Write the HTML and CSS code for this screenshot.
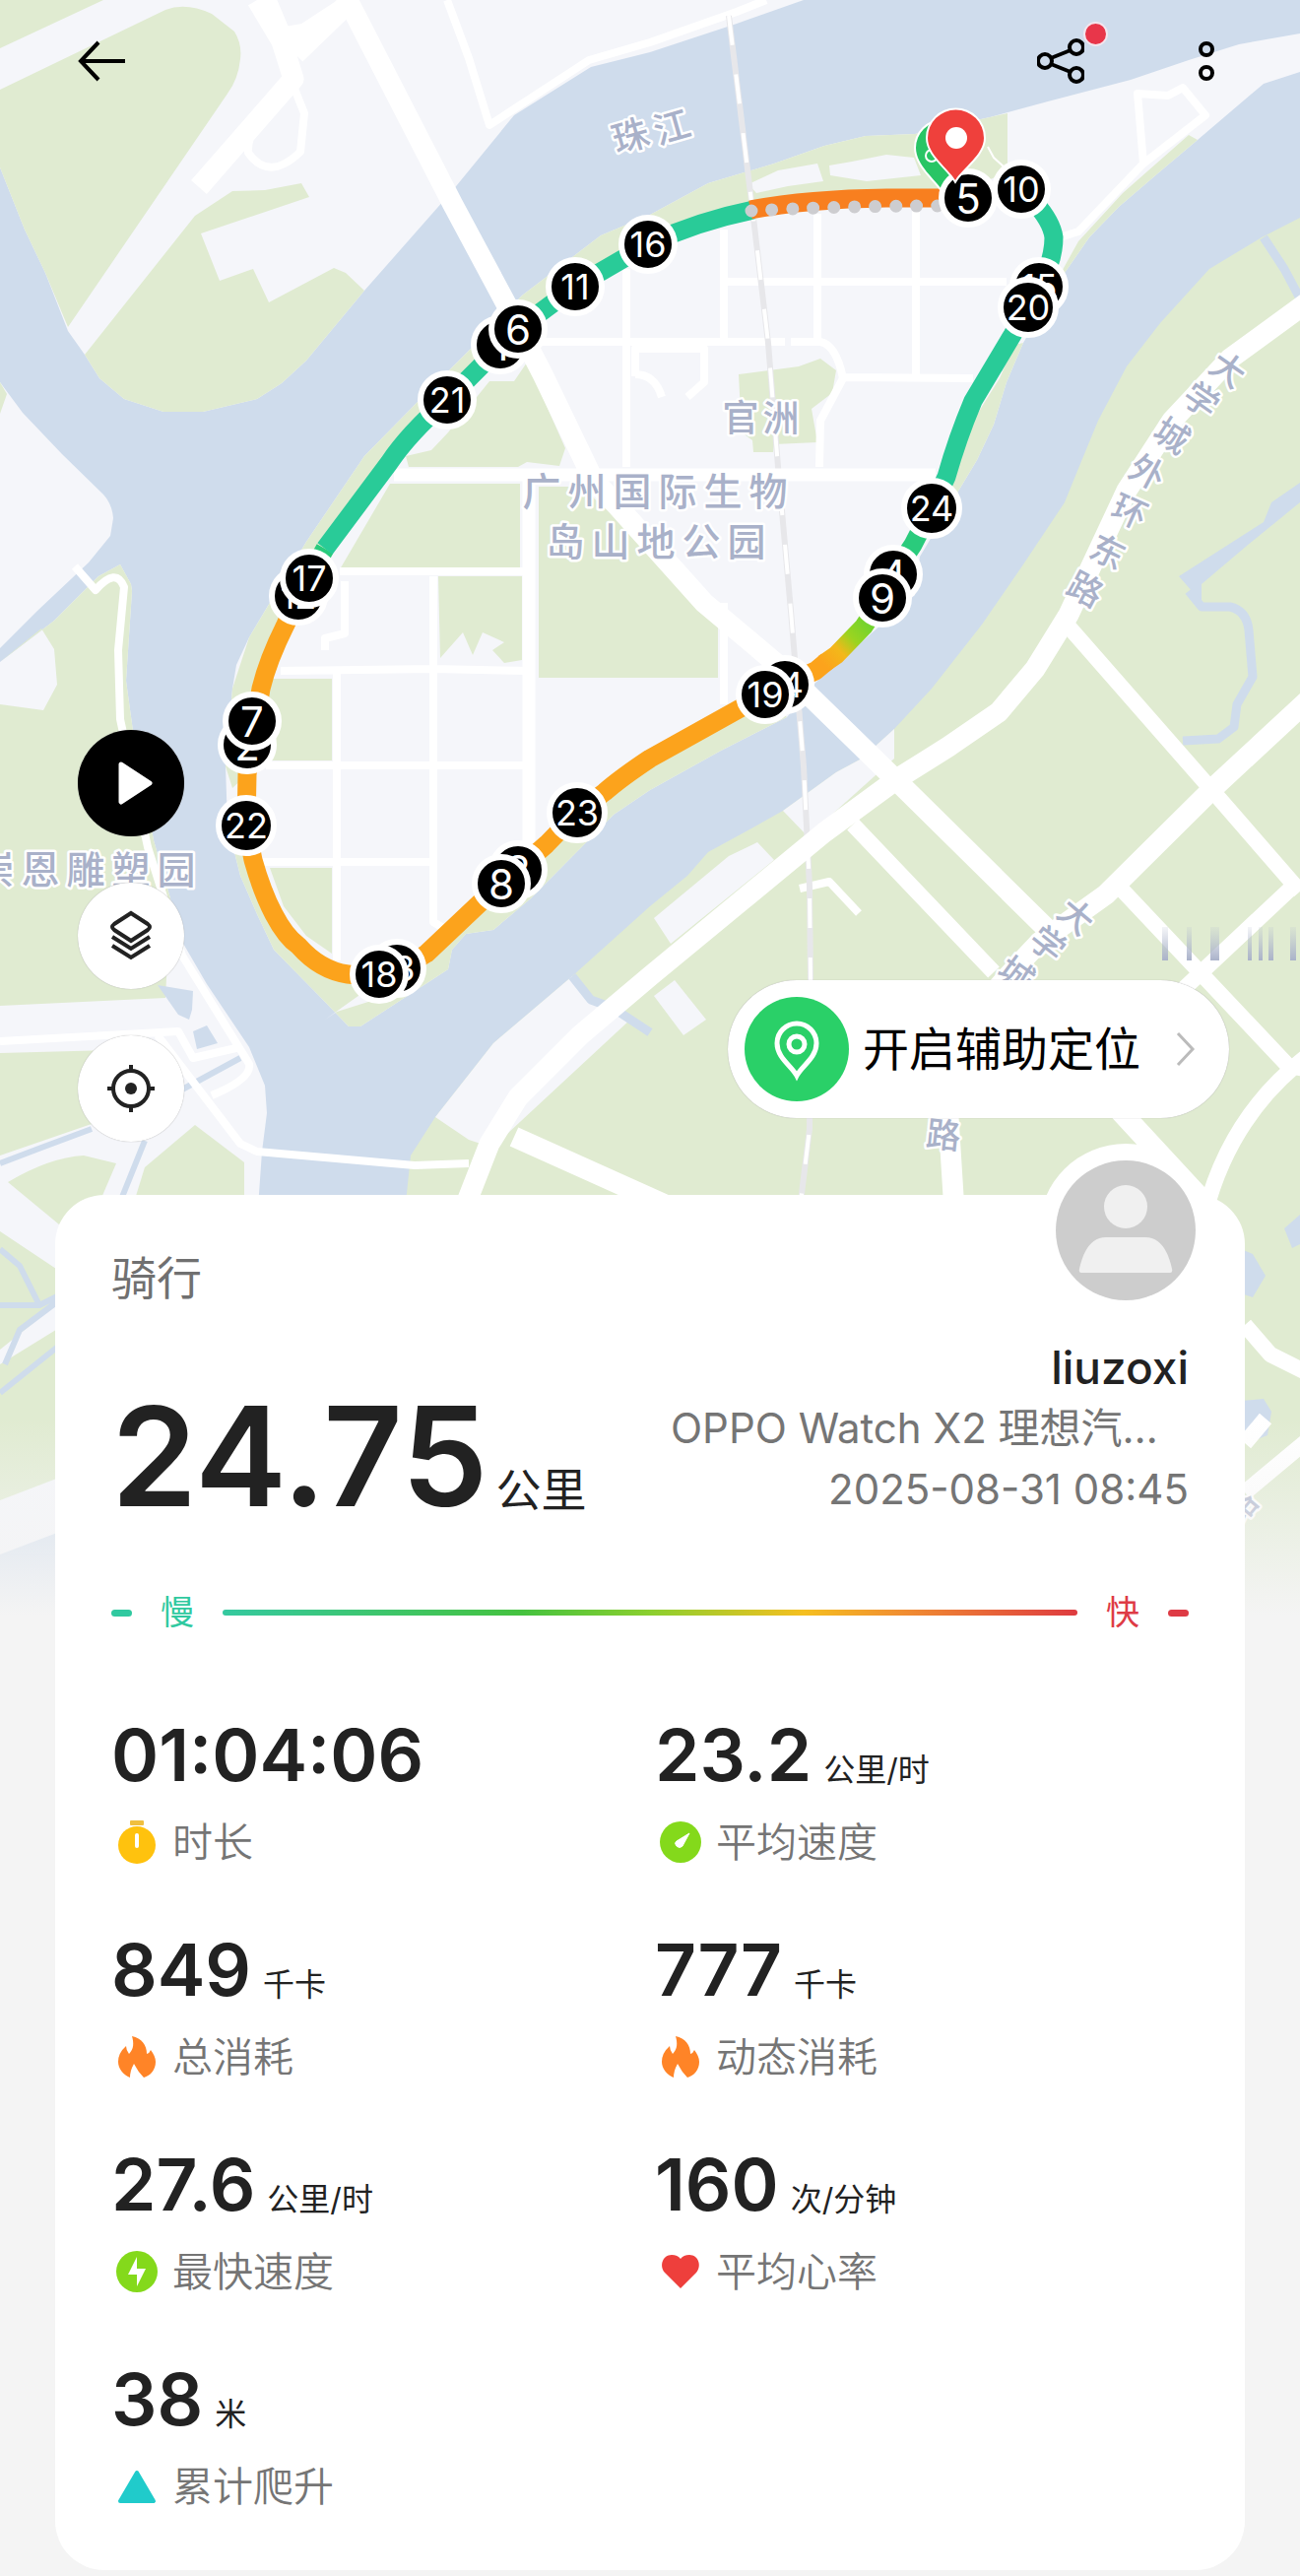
FILE: index.html
```html
<!DOCTYPE html>
<html lang="zh-CN">

<head>
  <meta charset="UTF-8" />
  <meta name="viewport" content="width=device-width, initial-scale=1" />
  <title>骑行记录</title>
  <link rel="stylesheet" href="styles.css">
</head>

<body>
  <svg class="map" viewBox="0 0 1320 1640" preserveAspectRatio="xMidYMin slice" role="img" aria-label="骑行轨迹地图">
    <defs>
      <linearGradient id="mix" gradientUnits="userSpaceOnUse" x1="836" y1="674" x2="888" y2="625">
        <stop offset="0" stop-color="#fca31c" />
        <stop offset="0.3" stop-color="#f3b81a" />
        <stop offset="0.55" stop-color="#9ad420" />
        <stop offset="1" stop-color="#5fd334" />
      </linearGradient>
      <linearGradient id="fade" x1="0" y1="0" x2="0" y2="1">
        <stop offset="0" stop-color="#f4f4f4" stop-opacity="0" />
        <stop offset="1" stop-color="#f4f4f4" />
      </linearGradient>
      <linearGradient id="smear" x1="0" y1="0" x2="0" y2="1">
        <stop offset="0" stop-color="#b4bccf" stop-opacity="0.15" />
        <stop offset="1" stop-color="#aab2ca" />
      </linearGradient>
    </defs>

    <!-- water is the base, land goes over it -->
    <rect class="water" width="1320" height="1640" />

    <!-- north west bank -->
    <path class="land" d="M0 0H816L748 24 660 53 600 68 522 117 459 194 370 295 311 366 286 389 261 405 206 418H166L126 405 101 384 86 360 69 336 46 277 25 233 0 170Z" />
    <path class="green" d="M0 0H105L0 49Z" />
    <path class="green" d="M0 91L168 10Q189 2 215 14L238 32Q246 45 244 60 242 80 231 95L69 332 46 277 25 233 0 170Z" />
    <path class="green" d="M86 360L198 219 236 194 269 193 306 186 314 200 204 237 223 285 257 273 273 307 339 272 351 277 370 295 311 366 286 389 261 405 206 418H166L126 405 101 384Z" />

    <!-- west bank -->
    <path class="land" d="M0 388L23 419 63 461 105 502Q114 512 115 526L112 544 90 571 38 620 0 658V1578L100 1540V1240H261L266 1169 271 1130 269 1102 253 1063 210 999 185 956 173 912 156 853 135 742 128 691 134 600 133 593 122 573 100 585 55 630 0 672Z" />
    <path class="green" d="M0 388L7 400 0 420Z" />
    <path class="green" d="M0 672L55 630 100 585 122 573 133 593 134 600 128 691 135 742 156 853 173 912 168 1013 0 1021V715L44 721 58 695 55 659 42 638 0 672Z" />
    <path class="green" d="M0 1069L150 1065 175 1120 90 1142 0 1173Z" />
    <path class="green" d="M147 1185L198 1142 248 1180V1240H130Z" />
    <path class="green" d="M8 1200Q50 1175 85 1173L118 1181 103 1216 60 1243Z" />
    <path class="green" d="M0 1250L60 1290V1322L0 1370Z" />
    <path class="green" d="M0 1385L60 1348V1500L0 1523Z" />
    <path class="water" d="M160 1000L196 1006 195 1025 192 1035 181 1030Z" />
    <path class="water" d="M196 1047L210 1041 221 1059 200 1065Z" />
    <path class="canal" d="M0 1181L42 1165 93 1146M147 1158L122 1220M185 1106L244 1074M0 1268L20 1285 40 1325H0M40 1325L60 1315M0 1414L60 1366M5 1385L20 1350 60 1320" />

    <!-- east bank -->
    <path class="green" d="M410 1240L417 1173 442 1134 501 1059 581 991 660 920 698 889 719 865 763 841 795 823 849 784 875 770 908 740 946 699 997 634 1039 573 1081 510 1094 478 1115 427 1144 372 1178 328 1228 273 1281 241 1320 221V1640H1200V1240Z" />
    <path class="land" d="M795 823L849 784 875 770 908 740V770L820 849Z" />
    <path class="land" d="M664 932L740 869 769 855 786 873 681 958Z" />
    <path class="land" d="M442 1134L501 1059 581 991 600 1018 640 1035 500 1165 476 1157Z" />
    <path class="land" d="M685 995L717 1035 694 1051 664 1011Z" />
    <path class="water" d="M1320 490L1291 510 1283 530 1197 585 1211 601 1220 620 1220 593 1266 554 1320 510Z" />
    <path class="stream" d="M1207 600L1220 616 1249 616Q1266 620 1268 640L1272 687 1256 715 1253 738 1237 750 1201 752M1283 241L1304 273 1320 303M581 991L600 1015 622 1023 660 1048" />
    <path class="water" d="M1320 1233L1304 1247 1312 1267 1320 1263ZM1260 1268L1272 1273 1285 1295 1272 1317 1260 1313ZM1260 1422L1283 1420 1291 1433 1287 1457 1272 1463 1260 1453Z" />

    <!-- island -->
    <path class="land" d="M660 218L719 186 786 166 837 148 879 138 929 136 1005 119 1064 103 1148 81 1207 61 1258 45 1320 34V73L1283 85 1216 142 1178 174 1136 210 1106 241 1081 277 1039 348 1022 388 1009 431 992 467 971 502 955 530 934 565 929 604 828 693 799 728 732 762 660 802 623 827 539 912 501 944 473 948 459 964 455 984 366 1042H354L328 1015 278 964 261 928 244 889 231 837 229 778 236 699 240 675 253 647 278 605 311 550 370 463 421 411 480 352 530 300 589 255 610 239Z" />
    <path class="green" d="M421 411L480 352 530 300 589 255 610 239 660 218 719 186 786 166 837 148 879 138 929 136 1005 119 1023 115V175L960 200 765 212 660 248 526 334 454 406 385 480 311 590 265 699 251 786 236 800 229 778 236 699 253 647 311 550 370 463Z" />
    <path class="green" d="M231 837L250 838 257 873 278 928 303 960 353 989 433 968 509 897 586 825 660 770 777 705 799 728 732 762 660 802 623 827 539 912 501 944 473 948 459 964 455 984 366 1042H354L328 1015 278 964 261 928 244 889Z" />
    <path class="green" d="M1216 142L1207 137 1140 196 1095 245 1070 290 1081 277 1106 241 1136 210 1178 174ZM1039 348L1030 350 1015 384 980 440 955 500 955 530 971 502 992 467 1009 431 1022 388Z" />
    <path class="green" d="M497 387L522 387 535 368 551 403 574 455 568 473 535 469 526 474H415L412 463 438 457 455 439Z" />
    <path class="green" d="M396 491H528V578H345Z" />
    <path class="green" d="M547 494H590L729 620V688H547Z" />
    <path class="green" d="M445 585H530V670L512 673 500 660 512 652 490 642 480 665 470 642 447 668Z" />
    <path class="green" d="M242 689H337V772H236ZM274 881H337V968L311 950 288 920Z" />
    <path class="green" d="M750 380L811 372 833 364 849 376 845 399 824 415 830 449 786 451 785 459H765L764 447 753 439Z" />
    <path class="land" d="M760 187L790 173 830 166 836 184 800 189 768 196ZM842 168L865 164 900 157 928 160 935 178 880 184 843 178Z" />
    <path class="road-sm" d="M1003 149L1009 160 1020 170" />
    <path class="land" d="M330 1035L368 1008 390 1012 342 1027Z" />

    <!-- small roads -->
    <path class="road" d="M738 286H1022M547 347H797M803 347H833Q849 350 856 384L833 427 832 474M856 383L988 384M735 233V347M830 217V347M930 210V384M636 273V474M345 580H537M440 585V936L460 948M285 681L440 679 537 681M270 777H537M265 875H437M342 683V975M735 612V715M350 590V643L330 648V660" />
    <path class="road" d="M645 382V354H715V388L698 403M645 380Q665 380 672 403" />
    <path class="road" d="M1161 166L1155 95 1186 97 1201 89 1224 117 1161 166 1095 235 1070 243" />
    <path class="road" d="M454 0L476 59 497 127 598 61 660 43 748 12 778 0" />
    <path class="road" d="M295 80L309 115 305 154Q273 185 252 155 250 132 285 90" />
    <path class="road" d="M76 575L97 599Q118 575 126 596L120 660 122 730 150 860 185 970 253 1080Q256 1095 215 1112M0 1057L181 1047 196 1074 244 1063M160 1051L244 1161 261 1169 421 1183 476 1181" />
    <path class="road" d="M812 902L842 895 872 927" />

    <!-- metro line -->
    <path class="rail" d="M740 16L765 221 780 348 790 474 803 620 816 778 822 900 823 995 822 1146 813 1220" />
    <path class="rail-dash" d="M740 16L765 221 780 348 790 474 803 620 816 778 822 900 823 995 822 1146 813 1220" />

    <!-- main roads -->
    <path class="street" d="M866 837L1009 987M1140 904L1308 1082 1330 1086M1320 893L1190 1015M1330 1070Q1250 1130 1224 1230M1085 636L1234 806 1320 905M1264 1345L1290 1375 1330 1395M1264 1465L1285 1440M1330 1460L1264 1515" />
    <path class="avenue" d="M400 482H950M537 486V880" />
    <path class="artery" d="M353 0L459 206 518 316 551 380 602 486 715 612 790 675 912 794 1064 944" />
    <path class="artery" d="M261 0L286 42 298 80 202 190M357 0L300 55M270 0L286 38 310 34 362 0" />
    <path class="artery" d="M1330 305L1249 364 1190 427 1144 498 1085 624 1051 679 1014 723 963 758 912 790 837 845 660 991 589 1051 526 1114 497 1161 470 1230" />
    <path class="artery" d="M1330 709L1234 798 1123 908 1056 956Q985 1030 976 1055L963 1134 969 1230M522 1154L680 1225M1130 1120L1216 1213 1240 1250" />

    <!-- half loaded label -->
    <path class="smear" fill="url(#smear)" d="M1180 941h6v34h-6zM1205 941h5v34h-5zM1229 941h9v34h-9zM1267 941h4v34h-4zM1278 941h4v34h-4zM1288 941h5v34h-5zM1310 941h6v34h-6z" />

    <!-- place names -->
    <g class="place">
      <text transform="translate(640 138) rotate(-16)">珠</text>
      <text transform="translate(682 129) rotate(-16)">江</text>
      <text x="752 793" y="424">官洲</text>
      <text class="place-lg" x="550 596 642 688 734 780" y="498">广州国际生物</text>
      <text class="place-lg" x="574 620 666 712 758" y="549">岛山地公园</text>
      <text class="place-lg" x="-5 41 87 133 179" y="882">崇恩雕塑园</text>
    </g>
    <g class="place place-road">
      <text transform="translate(1247 375) rotate(35)">大</text>
      <text transform="translate(1220 406) rotate(35)">学</text>
      <text transform="translate(1190 442) rotate(33)">城</text>
      <text transform="translate(1165 479) rotate(28)">外</text>
      <text transform="translate(1147 519) rotate(24)">环</text>
      <text transform="translate(1125 560) rotate(26)">东</text>
      <text transform="translate(1102 598) rotate(28)">路</text>
      <text transform="translate(1093 930) rotate(40)">大</text>
      <text transform="translate(1064 958) rotate(38)">学</text>
      <text transform="translate(1032 989) rotate(36)">城</text>
      <text transform="translate(958 1152) rotate(6)">路</text>
      <text transform="translate(1258 1530) rotate(-50)">路</text>
    </g>

    <!-- track -->
    <g class="track">
      <path stroke="#fca31c" d="M303 605L290 634Q272 670 265 699L251 786 250 838 257 873Q266 905 278 928T303 960Q325 985 353 989T405 985L433 968 488 916 555 857 586 825 614 804Q630 790 660 770L777 705 797 695 828 681 840 671" />
      <path stroke="url(#mix)" d="M836 674L849 665 877 636 896 607" />
      <path stroke="#2acb7c" d="M896 607L907 583 927 553 946 516M330 557L303 605" />
      <path stroke="#29cb98" d="M946 516L961 484Q972 445 988 407L1028 340 1055 291Q1070 265 1070 241 1068 225 1050 205M765 213Q710 224 658 248L584 291 526 334 454 406Q415 440 395 470L330 557" />
      <path stroke="#f87f1f" d="M983 201H900Q820 202 762 213" />
    </g>
    <path class="gap-dots" d="M763 214Q850 209 960 209" />

    <!-- kilometre markers -->
    <g class="km">
      <circle cx="508" cy="350" r="27" /><text class="one" x="508" y="350">1</text>
      <circle cx="251" cy="756" r="27" /><text class="one" x="251" y="756">2</text>
      <circle cx="526" cy="883" r="27" /><text class="one" x="526" y="883">3</text>
      <circle cx="907" cy="583" r="27" /><text class="one" x="907" y="583">4</text>
      <circle cx="303" cy="605" r="27" /><text x="303" y="605">12</text>
      <circle cx="403" cy="983" r="27" /><text x="403" y="983">13</text>
      <circle cx="797" cy="695" r="27" /><text x="797" y="695">14</text>
      <circle cx="1055" cy="291" r="27" /><text x="1055" y="291">15</text>
      <circle cx="526" cy="334" r="27" /><text class="one" x="526" y="334">6</text>
      <circle cx="256" cy="732" r="27" /><text class="one" x="256" y="732">7</text>
      <circle cx="509" cy="897" r="27" /><text class="one" x="509" y="897">8</text>
      <circle cx="896" cy="607" r="27" /><text class="one" x="896" y="607">9</text>
      <circle cx="1037" cy="192" r="27" /><text x="1037" y="192">10</text>
      <circle cx="584" cy="291" r="27" /><text x="584" y="291">11</text>
      <circle cx="658" cy="248" r="27" /><text x="658" y="248">16</text>
      <circle cx="314" cy="587" r="27" /><text x="314" y="587">17</text>
      <circle cx="385" cy="989" r="27" /><text x="385" y="989">18</text>
      <circle cx="777" cy="705" r="27" /><text x="777" y="705">19</text>
      <circle cx="1044" cy="312" r="28" /><text x="1044" y="312">20</text>
      <circle cx="454" cy="406" r="27" /><text x="454" y="406">21</text>
      <circle cx="250" cy="838" r="28" /><text x="250" y="838">22</text>
      <circle cx="586" cy="825" r="28" /><text x="586" y="825">23</text>
      <circle cx="946" cy="516" r="28" /><text x="946" y="516">24</text>
    </g>

    <!-- start and finish pins -->
    <path class="pin pin-start" d="M958 195C950 182 930 168 930 150A27 27 0 0 1 984 150C984 168 966 182 958 195Z" />
    <circle cx="946" cy="158" r="6" fill="none" stroke="#fff" stroke-width="2" />
    <g class="km">
      <circle cx="983" cy="201" r="27" /><text class="one" x="983" y="201">5</text>
    </g>
    <path class="pin pin-end" d="M970 183C962 170 942 157 942 140A28 28 0 0 1 999 140C999 157 978 170 970 183Z" />
    <circle cx="971" cy="140" r="11" fill="#fff" />

    <rect y="1440" width="1320" height="200" fill="url(#fade)" />
  </svg>

  <header class="topbar">
    <button class="icon-btn" aria-label="返回">
      <svg width="48" height="48" viewBox="0 0 48 48"><path d="M48 24H3M21 5L3 24L21 43" /></svg>
    </button>
    <div class="topbar-right">
      <button class="icon-btn" aria-label="分享">
        <svg width="48" height="48" viewBox="0 0 48 48">
          <circle cx="8" cy="24" r="7" /><circle cx="40" cy="10" r="7" /><circle cx="40" cy="38" r="7" />
          <path d="M14 21L34 13M14 27L34 35" />
        </svg>
        <span class="dot"></span>
      </button>
      <button class="icon-btn icon-more" aria-label="更多">
        <svg width="20" height="48" viewBox="0 0 20 48"><circle cx="10" cy="12" r="6" /><circle cx="10" cy="36" r="6" /></svg>
      </button>
    </div>
  </header>

  <section class="map-tools">
    <div class="tool-list">
      <button class="tool tool-play" aria-label="播放轨迹">
        <svg width="108" height="108" viewBox="0 0 108 108"><path d="M44 35L73 54L44 73Z" fill="#fff" stroke="#fff" stroke-width="5" stroke-linejoin="round" /></svg>
      </button>
      <button class="tool" aria-label="图层">
        <svg class="line" width="108" height="108" viewBox="0 0 108 108">
          <path d="M54 31L71 42Q75 45 71 48L54 59L37 48Q33 45 37 42Z" />
          <path d="M35 55L54 67L73 55M35 64L54 76L73 64" />
        </svg>
      </button>
      <button class="tool" aria-label="定位">
        <svg class="line" width="108" height="108" viewBox="0 0 108 108">
          <circle cx="54" cy="54" r="18" />
          <path d="M54 30V36M54 72V78M30 54H36M72 54H78" />
          <circle cx="54" cy="54" r="6" fill="#222" stroke="none" />
        </svg>
      </button>
    </div>
    <button class="assist">
      <span class="assist-icon">
        <svg width="106" height="106" viewBox="0 0 106 106"><path d="M53 80C48 70 33 62 33 47A20 20 0 0 1 73 47C73 62 58 70 53 80Z" /><circle cx="53" cy="48" r="8" /></svg>
      </span>
      <span class="assist-text">开启辅助定位</span>
      <svg class="chevron" width="20" height="36" viewBox="0 0 20 36"><path d="M2 2L17 18L2 34" /></svg>
    </button>
  </section>

  <main class="card">
    <div class="summary">
      <div class="summary-left">
        <h1>骑行</h1>
        <p class="distance">24.75<span>公里</span></p>
      </div>
      <div class="summary-right">
        <svg class="avatar" width="176" height="176" viewBox="0 0 176 176">
          <circle cx="88" cy="88" r="88" fill="#fff" />
          <circle cx="88" cy="88" r="71" fill="#cdcdcd" />
          <circle cx="88" cy="64" r="22" fill="#f0f0f0" />
          <path d="M43 131Q40 131 41 127Q48 95 68 95H108Q128 95 135 127Q136 131 133 131Z" fill="#f0f0f0" />
        </svg>
        <p class="name">liuzoxi</p>
        <p class="device">OPPO Watch X2 理想汽…</p>
        <p class="time">2025-08-31 08:45</p>
      </div>
    </div>

    <div class="scale">
      <i class="dash dash-slow"></i>
      <span class="slow">慢</span>
      <i class="bar"></i>
      <span class="fast">快</span>
      <i class="dash dash-fast"></i>
    </div>

    <dl class="stats">
      <div class="stat">
        <dd>01:04:06</dd>
        <dt>
          <svg width="52" height="52" viewBox="0 0 52 52"><circle cx="26" cy="29" r="19" fill="#ffc20e" /><rect x="19" y="4" width="14" height="5" rx="1" fill="#f0bf3f" /><path d="M26 19V30" stroke="#fff" stroke-width="4" stroke-linecap="round" /></svg>
          时长
        </dt>
      </div>
      <div class="stat">
        <dd>23.2<span>公里/时</span></dd>
        <dt>
          <svg width="52" height="52" viewBox="0 0 52 52"><circle cx="26" cy="26" r="21" fill="#84d91b" /><path d="M35 17L28 30Q25 33 22 30T22 25Z" fill="#fff" stroke="#fff" stroke-linejoin="round" /></svg>
          平均速度
        </dt>
      </div>
      <div class="stat">
        <dd>849<span>千卡</span></dd>
        <dt>
          <svg width="52" height="52" viewBox="0 0 52 52"><path class="flame" d="M21 5C31 7 36 14 36 23Q39 22 40 19C43 23 45 27 45 31C45 39 40 45 33 47Q27 41 23 33Q19 40 19 47C12 44 7 38 7 31Q7 22 15 15Q15 19 18 23C23 18 23 12 21 5Z" /></svg>
          总消耗
        </dt>
      </div>
      <div class="stat">
        <dd>777<span>千卡</span></dd>
        <dt>
          <svg width="52" height="52" viewBox="0 0 52 52"><path class="flame" d="M21 5C31 7 36 14 36 23Q39 22 40 19C43 23 45 27 45 31C45 39 40 45 33 47Q27 41 23 33Q19 40 19 47C12 44 7 38 7 31Q7 22 15 15Q15 19 18 23C23 18 23 12 21 5Z" /></svg>
          动态消耗
        </dt>
      </div>
      <div class="stat">
        <dd>27.6<span>公里/时</span></dd>
        <dt>
          <svg width="52" height="52" viewBox="0 0 52 52"><circle cx="26" cy="26" r="21" fill="#84d91b" /><path d="M26 11V23H35L26 41V29H17Z" fill="#fff" /></svg>
          最快速度
        </dt>
      </div>
      <div class="stat">
        <dd>160<span>次/分钟</span></dd>
        <dt>
          <svg width="52" height="52" viewBox="0 0 52 52"><path d="M26 43L10 27C4 20 8 9 17 9Q23 9 26 13Q29 9 35 9C44 9 48 20 42 27Z" fill="#ee3f3c" /></svg>
          平均心率
        </dt>
      </div>
      <div class="stat">
        <dd>38<span>米</span></dd>
        <dt>
          <svg width="52" height="52" viewBox="0 0 52 52"><path d="M26 12L43 41H9Z" fill="#20cbcb" stroke="#20cbcb" stroke-width="4" stroke-linejoin="round" /></svg>
          累计爬升
        </dt>
      </div>
    </dl>
  </main>
</body>

</html>
```
FILE: styles.css
```css
* {
  box-sizing: border-box;
}

body {
  position: relative;
  margin: 0;
  padding-bottom: 5px;
  background: #f4f4f4;
  color: #222;
  font-family: Inter, "Noto Sans CJK SC", sans-serif;
}

h1,
p,
dl,
dd {
  margin: 0;
}

button {
  padding: 0;
  border: 0;
  background: none;
  font: inherit;
  color: #000;
}

svg {
  display: block;
  flex: none;
}

/* map */
.map {
  position: absolute;
  top: 0;
  left: 0;
  z-index: -1;
  width: 100%;
  height: 1640px;
}

.water {
  fill: #cfdcec;
}

.land {
  fill: #f5f6fa;
}

.green {
  fill: #e0ebd1;
}

.road,
.road-sm,
.street,
.avenue,
.artery,
.rail,
.rail-dash,
.canal,
.stream {
  fill: none;
  stroke: #fff;
  stroke-linejoin: round;
}

.road {
  stroke-width: 8;
}

.road-sm {
  stroke-width: 2;
}

.street {
  stroke-width: 16;
}

.avenue {
  stroke-width: 13;
}

.artery {
  stroke-width: 21;
}

.rail {
  stroke: #e7e7ea;
  stroke-width: 6;
}

.rail-dash {
  stroke-width: 4;
  stroke-dasharray: 30 30;
}

.canal {
  stroke: #cfdcec;
  stroke-width: 6;
}

.stream {
  stroke: #cfdcec;
  stroke-width: 9;
}

.place text {
  fill: #a9b1c9;
  stroke: #fff;
  stroke-width: 5;
  stroke-linejoin: round;
  paint-order: stroke;
  font-size: 37px;
  font-weight: 500;
  text-anchor: middle;
  dominant-baseline: central;
}

.place .place-lg {
  font-size: 39px;
}

.place-road text {
  font-size: 35px;
}

.track path {
  fill: none;
  stroke-width: 19;
  stroke-linejoin: round;
}

.gap-dots {
  fill: none;
  stroke: #cdcdd0;
  stroke-width: 13;
  stroke-linecap: round;
  stroke-dasharray: 0 21;
}

.km circle {
  fill: #000;
  stroke: #fff;
  stroke-width: 6;
}

.km text {
  fill: #fff;
  font-size: 36px;
  font-weight: 400;
  text-anchor: middle;
  dominant-baseline: central;
}

.km .one {
  font-size: 42px;
}

.pin {
  stroke: #fff;
  stroke-width: 4;
  paint-order: stroke;
}

.pin-start {
  fill: #29c565;
}

.pin-end {
  fill: #ef403c;
}

/* top bar */
.topbar {
  display: flex;
  justify-content: space-between;
  padding: 38px 85px 38px 79px;
}

.topbar-right {
  display: flex;
  gap: 114px;
}

.icon-btn {
  position: relative;
  width: 48px;
  height: 48px;
}

.icon-more {
  width: 20px;
}

.icon-btn svg {
  fill: none;
  stroke: #000;
  stroke-width: 4;
}

.dot {
  position: absolute;
  top: -16px;
  right: -24px;
  width: 25px;
  height: 25px;
  border: 2px solid #f3e6ee;
  border-radius: 50%;
  background: #e8364a;
}

/* buttons over the map */
.map-tools {
  display: flex;
  align-items: flex-end;
  justify-content: space-between;
  padding: 617px 72px 54px 79px;
}

.tool-list {
  display: flex;
  flex-direction: column;
  gap: 47px;
}

.tool {
  width: 108px;
  height: 108px;
  border-radius: 50%;
  background: #fff;
  box-shadow: 0 0 1px #999;
}

.tool-play {
  background: #000;
}

.line {
  fill: none;
  stroke: #222;
  stroke-width: 4;
}

.assist {
  display: flex;
  align-items: center;
  height: 140px;
  margin-bottom: 24px;
  padding: 0 34px 0 17px;
  border-radius: 70px;
  background: #fff;
  box-shadow: 0 0 1px #999;
}

.assist-icon {
  border-radius: 50%;
  background: #2ad068;
}

.assist-icon svg {
  fill: none;
  stroke: #fff;
  stroke-width: 5;
}

.assist-text {
  margin: 0 36px 0 14px;
  font-size: 47px;
  line-height: 60px;
}

.chevron {
  fill: none;
  stroke: #bbb;
  stroke-width: 3;
}

/* workout card */
.card {
  margin: 0 56px;
  padding: 0 57px 60px;
  border-radius: 50px;
  background: #fff;
}

.summary {
  display: flex;
  justify-content: space-between;
}

.summary-left {
  display: flex;
  flex-direction: column;
  justify-content: space-between;
}

.summary h1 {
  margin-top: 54px;
  font-size: 46px;
  font-weight: 400;
  line-height: 60px;
  color: #707070;
}

.distance {
  font-size: 140px;
  font-weight: 600;
  line-height: 130px;
}

.distance span {
  margin-left: 8px;
  font-size: 46px;
  font-weight: 400;
  line-height: 1;
}

.summary-right {
  display: flex;
  flex-direction: column;
  align-items: flex-end;
  color: #757575;
  font-size: 42px;
  line-height: 62px;
}

.avatar {
  margin: -52px -24px 20px 0;
}

.name {
  color: #222;
  font-size: 46px;
  font-weight: 500;
}

.device {
  width: 526px;
}

.scale {
  display: flex;
  align-items: center;
  gap: 29px;
  margin: 69px 0 75px;
  font-size: 34px;
  line-height: 50px;
}

.dash {
  width: 21px;
  height: 7px;
  border-radius: 4px;
}

.dash-slow {
  background: #30c9a0;
}

.dash-fast {
  background: #de3b45;
}

.slow {
  color: #30c9a0;
}

.fast {
  color: #de3b45;
}

.bar {
  flex: 1;
  height: 6px;
  border-radius: 3px;
  background: linear-gradient(to right, #35c9a0, #45c23f 35%, #8bcf2f 50%, #f5bf20 68%, #f08c32 80%, #de3b40);
}

.stats {
  display: grid;
  grid-template-columns: 1fr 1fr;
  gap: 60px 10px;
}

.stat {
  display: flex;
  flex-direction: column;
  gap: 18px;
}

.stat dd {
  font-size: 73px;
  font-weight: 600;
  line-height: 90px;
}

.stat dd span {
  margin-left: 12px;
  font-size: 32px;
  font-weight: 400;
  line-height: 1;
}

.stat dt {
  display: flex;
  align-items: center;
  gap: 10px;
  height: 50px;
  font-size: 41px;
  font-weight: 350;
  line-height: 50px;
  color: #757575;
}

.flame {
  fill: #ff8427;
}
```
